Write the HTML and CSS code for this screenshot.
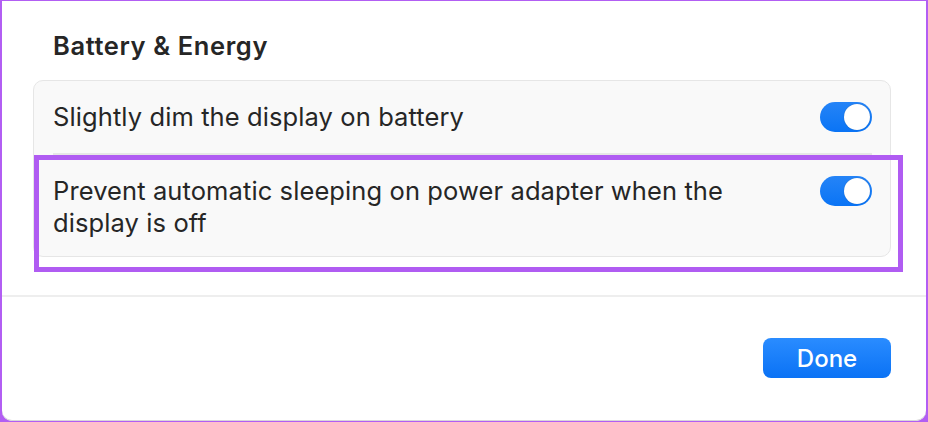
FILE: index.html
```html
<!DOCTYPE html>
<html lang="en">
<head>
    <meta charset="UTF-8">
    <meta name="viewport" content="width=device-width, initial-scale=1.0">
    <title>Battery &amp; Energy</title>
    <link rel="stylesheet" href="styles.css">
</head>
<body>
    <div class="frame">
        <div class="sheet">
            <div class="content">
                <h2 class="section-title">Battery &amp; Energy</h2>
                <div class="group">
                    <div class="row">
                        <span class="row-label">Slightly dim the display on battery</span>
                        <span class="toggle"><span class="knob"></span></span>
                    </div>
                    <div class="row row-tall">
                        <span class="row-label">Prevent automatic sleeping on power adapter when the display is off</span>
                        <span class="toggle"><span class="knob"></span></span>
                    </div>
                </div>
                <div class="highlight"></div>
            </div>
            <div class="footer">
                <button class="done-btn">Done</button>
            </div>
        </div>
    </div>
</body>
</html>
```

FILE: styles.css
```css
html, body {
    margin: 0;
    padding: 0;
}
body {
    font-family: Inter, "Helvetica Neue", Arial, sans-serif;
    color: #262626;
    background-color: #b25ef3;
}
.frame {
    width: 928px;
    height: 422px;
    box-sizing: border-box;
    padding: 1px 2px 1px 2px;
}
.sheet {
    background-color: #ffffff;
    height: 100%;
    display: flex;
    flex-direction: column;
    border-radius: 0 0 10px 10px;
    box-shadow: inset 0 -1px 0 #d8d8d8;
}
.content {
    position: relative;
    padding: 0 35px 0 31px;
    border-bottom: 2px solid #eeeeee;
    height: 296px;
    box-sizing: border-box;
}
.section-title {
    margin: 0;
    padding: 30px 0 0 20px;
    font-size: 25.5px;
    font-weight: 600;
    line-height: 30px;
    letter-spacing: 0.6px;
}
.group {
    margin-top: 19px;
    background-color: #f9f9f9;
    border: 1px solid #e6e6e6;
    border-radius: 10px;
    padding: 0 18px 0 19px;
}
.row {
    display: flex;
    align-items: center;
    justify-content: space-between;
    height: 72px;
    font-size: 25.5px;
    line-height: 32px;
    letter-spacing: 0.1px;
}
.row + .row {
    border-top: 2px solid #e6e6e6;
}
.row-tall {
    align-items: flex-start;
    height: 103px;
    padding-top: 20px;
    box-sizing: border-box;
}
.row-label {
    max-width: 700px;
}
.toggle {
    flex: none;
    width: 52px;
    height: 30px;
    border-radius: 15px;
    background: linear-gradient(#2584f7, #0a74f5);
    display: flex;
    justify-content: flex-end;
    align-items: center;
    padding: 0 2px;
    box-sizing: border-box;
}
.row-tall .toggle {
    margin-top: 1px;
}
.knob {
    width: 26px;
    height: 26px;
    border-radius: 50%;
    background-color: #ffffff;
    box-shadow: 0 0 1px rgba(0, 0, 0, 0.3);
}
.highlight {
    position: absolute;
    left: 32px;
    top: 154px;
    width: 859px;
    height: 107px;
    border: 5px solid #b05cf2;
}
.footer {
    flex: 1;
    display: flex;
    justify-content: flex-end;
    align-items: flex-start;
    padding: 41px 35px 0 0;
}
.done-btn {
    width: 128px;
    height: 40px;
    border: none;
    border-radius: 8px;
    background: linear-gradient(#2a8cff, #0a72f5);
    color: #ffffff;
    font-family: Inter, "Helvetica Neue", Arial, sans-serif;
    font-size: 24px;
    font-weight: 500;
    padding: 0;
}
```
